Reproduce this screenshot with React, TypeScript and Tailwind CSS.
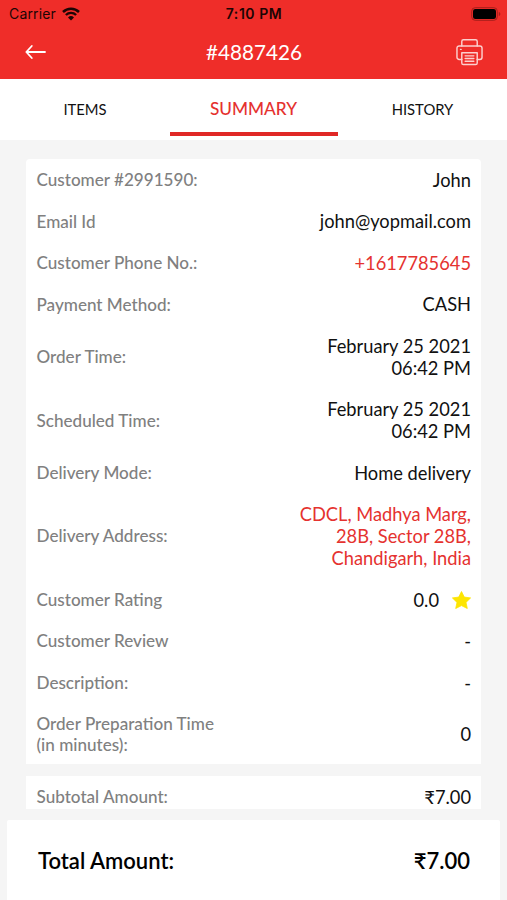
import React from 'react';

type Row = {
  label: React.ReactNode;
  value: React.ReactNode;
  accent?: boolean;
};

const StarIcon = () => (
  <svg width="19" height="18" viewBox="0 0 19 18" fill="#fde503" stroke="#fde503" strokeWidth="0.800" strokeLinejoin="round">
    <path d="M9.500 0.500l2.800 5.600 6.300.8-4.600 4.500 1.300 6.100-5.800-2.900-5.800 2.900 1.300-6.100L.4 6.900l6.300-.8z" />
  </svg>
);

const rows: Row[] = [
  { label: 'Customer #2991590:', value: 'John' },
  { label: 'Email Id', value: 'john@yopmail.com' },
  { label: 'Customer Phone No.:', value: '+1617785645', accent: true },
  { label: 'Payment Method:', value: 'CASH' },
  { label: 'Order Time:', value: <>February 25 2021<br />06:42 PM</> },
  { label: 'Scheduled Time:', value: <>February 25 2021<br />06:42 PM</> },
  { label: 'Delivery Mode:', value: 'Home delivery' },
  {
    label: 'Delivery Address:',
    value: <>CDCL, Madhya Marg,<br />28B, Sector 28B,<br />Chandigarh, India</>,
    accent: true,
  },
  {
    label: 'Customer Rating',
    value: (
      <span className="flex items-center gap-[13px]">
        0.0 <StarIcon />
      </span>
    ),
  },
  { label: 'Customer Review', value: '-' },
  { label: 'Description:', value: '-' },
  { label: <>Order Preparation Time<br />(in minutes):</>, value: '0' },
];

const WifiIcon = () => (
  <svg width="18" height="14" viewBox="0 0 18 14" fill="none" stroke="#1c0504">
    <path d="M1 5a11.500 11.500 0 0 1 16 0" strokeWidth="2.500" />
    <path d="M3.900 8a7.300 7.300 0 0 1 10.200 0" strokeWidth="2.400" />
    <path d="M9 13.600L6 10.500a4.300 4.300 0 0 1 6 0z" fill="#1c0504" stroke="none" />
  </svg>
);

const BatteryIcon = () => (
  <svg width="30" height="14" viewBox="0 0 30 14">
    <rect x="0.700" y="0.700" width="25.600" height="12.600" rx="3.500" fill="none" stroke="#a51f1b" />
    <rect x="2" y="2" width="23" height="10" rx="2.300" fill="#000" />
    <path d="M27.800 5v4c1-.3 1.500-1 1.500-2s-.5-1.700-1.500-2z" fill="#a51f1b" />
  </svg>
);

const BackIcon = () => (
  <svg width="22" height="16" viewBox="0 0 22 16" fill="none" stroke="#fff" strokeWidth="1.800" strokeLinecap="round" strokeLinejoin="round">
    <path d="M20 8H1.500M6.800 2L1.300 8l5.500 6" />
  </svg>
);

const PrinterIcon = () => (
  <svg width="27" height="28" viewBox="0 0 28 28" fill="none" stroke="#fcd0ce" strokeWidth="1.500" strokeLinejoin="round" strokeLinecap="round">
    <path d="M6 7.700V3a1.700 1.700 0 0 1 1.700-1.700h12.600A1.700 1.700 0 0 1 22 3v4.700" />
    <path d="M6 21.700H3.300a2.300 2.300 0 0 1-2.300-2.300V10a2.300 2.300 0 0 1 2.300-2.300h21.400A2.300 2.300 0 0 1 27 10v9.400a2.300 2.300 0 0 1-2.300 2.300H22" />
    <path d="M6 14.700h16v10.600a1.700 1.700 0 0 1-1.700 1.700H7.700A1.700 1.700 0 0 1 6 25.300z" />
    <path d="M9.500 18h9M9.500 20.800h9M9.500 23.600h9M4.700 11.300h.6" />
  </svg>
);

const DetailRow: React.FC<Row> = ({ label, value, accent }) => (
  <div className="flex items-center justify-between pt-[10.200px] pb-[9.300px]">
    <div className="-mb-[0.800px] pt-[0.800px] text-[17.100px] leading-[20.800px] font-medium text-[#808080]">{label}</div>
    <div className={`text-right text-[18.270px] leading-[22px] ${accent ? 'text-[#e5322f]' : 'text-[#111]'}`}>
      {value}
    </div>
  </div>
);

const App: React.FC = () => {
  return (
    <div className="flex h-[900px] w-full flex-col overflow-hidden bg-[#f5f5f5] font-['Lato',sans-serif]">
      <header className="h-[79px] shrink-0 bg-[#ef2d29]">
        <div className="grid h-[27px] grid-cols-3 items-center pr-[6px] pl-[7px] font-['Inter',sans-serif] text-[14px] text-[#1c0504]">
          <div className="flex items-center gap-[6px] pl-[2px]">
            <span className="tracking-[0.150px]">Carrier</span>
            <WifiIcon />
          </div>
          <div className="text-center font-semibold tracking-[0.550px]">7:10 PM</div>
          <div className="flex justify-end">
            <BatteryIcon />
          </div>
        </div>
        <div className="flex h-[50px] items-center justify-between pr-6 pl-[25px]">
          <div className="w-[27px]">
            <BackIcon />
          </div>
          <h1 className="pt-[2px] text-[20.700px] text-white">#4887426</h1>
          <PrinterIcon />
        </div>
      </header>

      <nav className="grid h-[61px] shrink-0 grid-cols-3 bg-white text-center text-[14.800px] text-[#111]">
        <div className="pt-[19px] pl-px">ITEMS</div>
        <div className="flex flex-col justify-between pb-[4px] text-[17.200px] font-medium text-[#e5322f]">
          <span className="pt-[17px]">SUMMARY</span>
          <div className="ml-px h-[4px] bg-[#e02826]" />
        </div>
        <div className="pt-[19px]">HISTORY</div>
      </nav>

      <main className="h-[669px] shrink-0 overflow-hidden px-[26px] pt-[18.500px]">
        <section className="rounded-t-[4px] bg-white pr-[10px] pl-[10.500px]">
          {rows.map((row, i) => (
            <DetailRow key={i} {...row} />
          ))}
        </section>
        <section className="mt-3 bg-white pr-[10px] pl-[10.500px]">
          <DetailRow label="Subtotal Amount:" value="₹7.00" />
        </section>
      </main>

      <footer className="mx-[7px] mt-[11px] flex flex-1 items-center justify-between rounded-t-[2px] bg-white pr-[30px] pl-[31px] pt-px text-[22px] font-semibold text-black">
        <span>Total Amount:</span>
        <span>₹7.00</span>
      </footer>
    </div>
  );
};

export default App;
